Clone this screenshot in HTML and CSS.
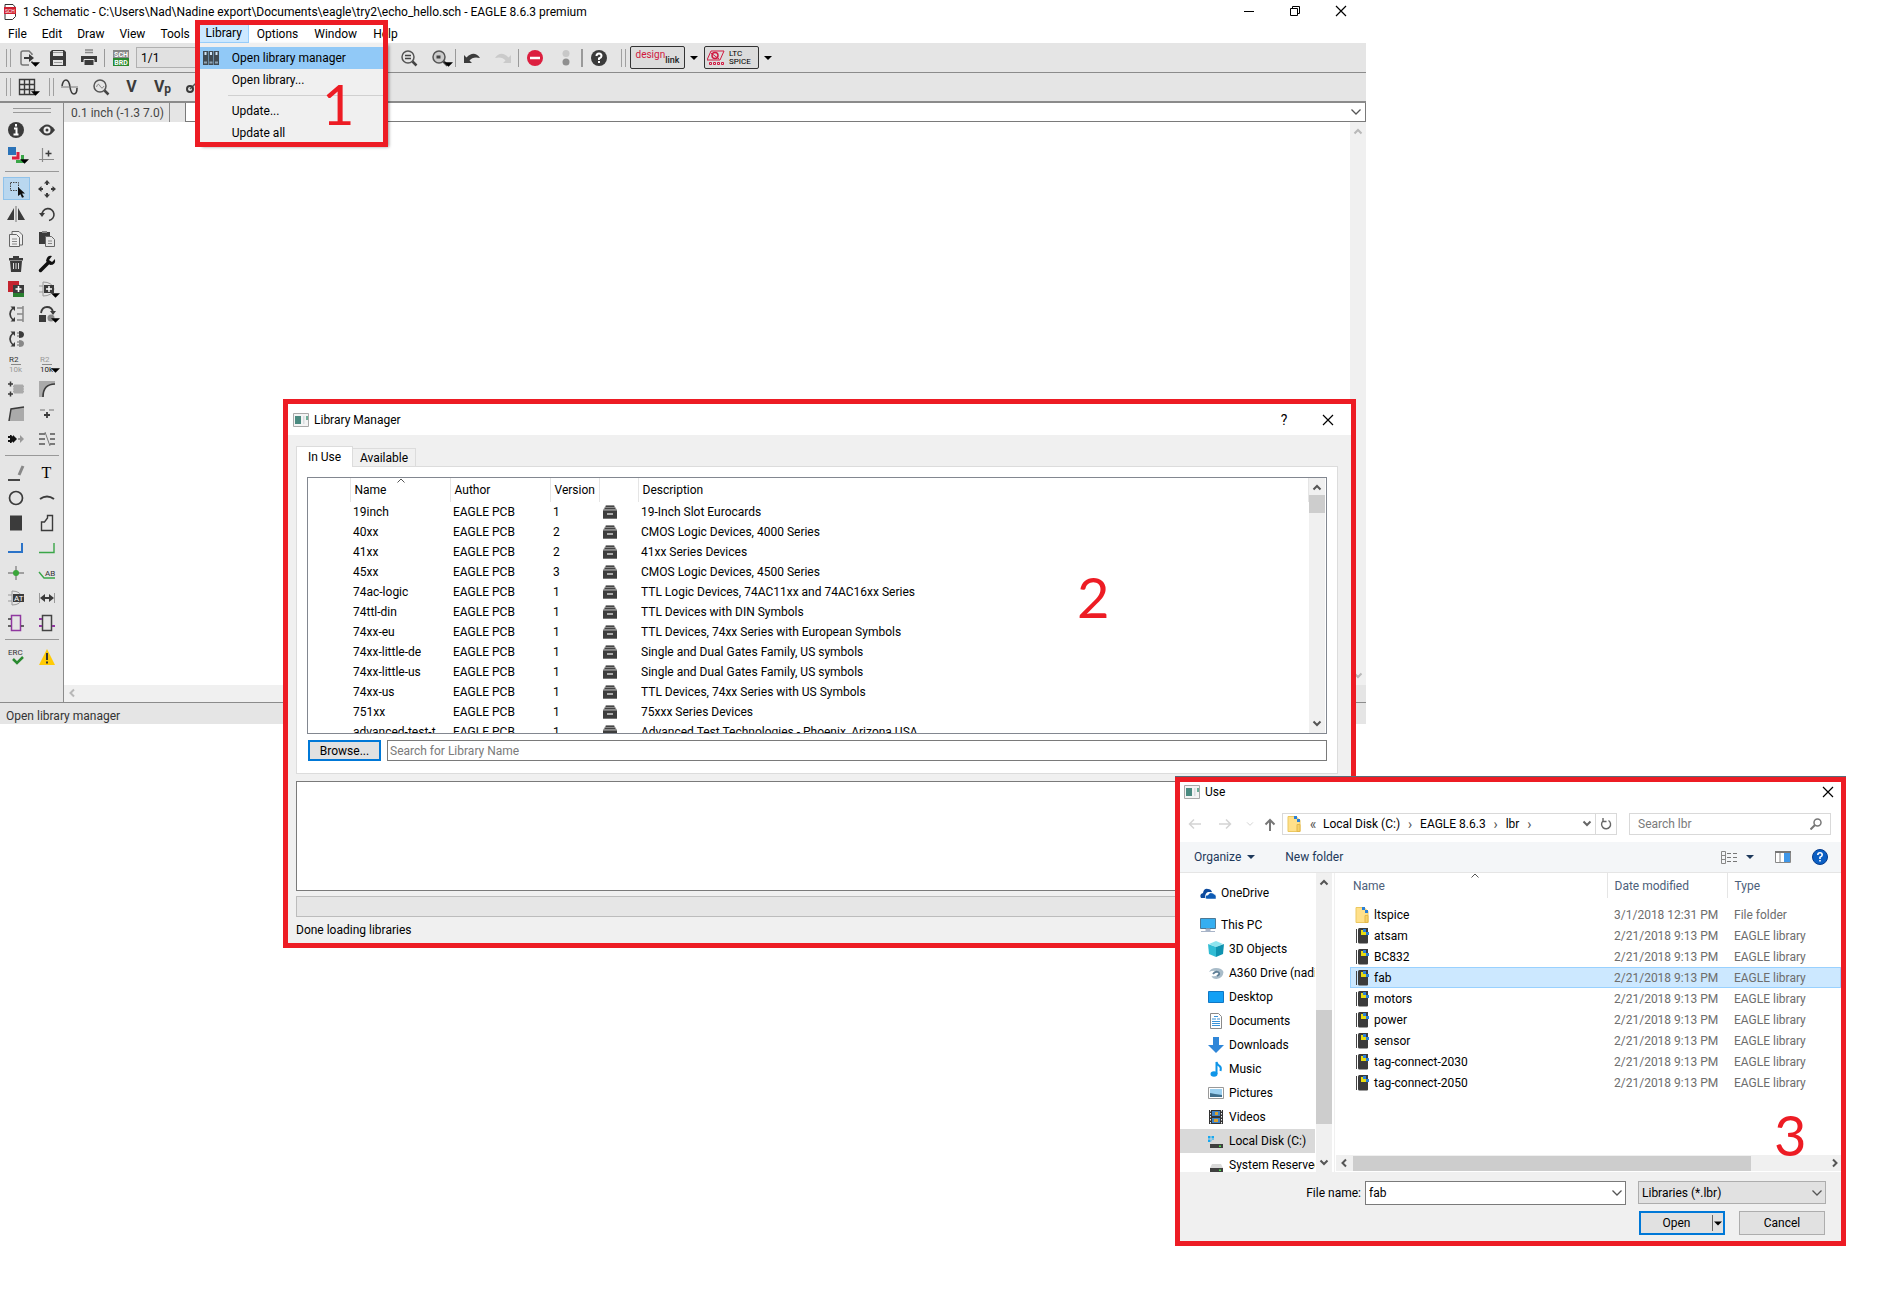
FILE: index.html
```html
<!DOCTYPE html>
<html lang="en">
<head>
<meta charset="utf-8">
<title>1 Schematic - EAGLE 8.6.3 premium</title>
<link rel="stylesheet" href="styles.css">
</head>
<body>
<svg class="defs" aria-hidden="true">
  <symbol id="drawer" viewBox="0 0 16 14"><path d="M4 0h8l3 5H1z" fill="#8c8c8c"/><path d="M4 1.5h8M3 3.5h10" stroke="#444"/><path d="M1 5h14v8H1z" fill="#3d3d3d"/><path d="M1 5.5h14M1 13.5h14" stroke="#777"/><path d="M5 9h6" stroke="#ddd" stroke-width="1.4"/></symbol>
  <symbol id="lbr" viewBox="0 0 16 16"><path d="M1.5 1v14" stroke="#444"/><path d="M3 1.500q0-1.500 1.500-1.500H13v14.500q0 1-1 1H4.500Q3 15.500 3 14z" fill="#3b3b3b"/><path d="M6 2h5v5H6z" fill="#e8dc10"/><path d="M8 1h3v3H8zM11 4h3v3h-3z" fill="#2a7fd8"/></symbol>
  <symbol id="folder" viewBox="0 0 16 16"><path d="M1 .5h8l4 4v11H1z" fill="#ffe08a" stroke="#ecc860"/><path d="M10 8.500h3v7h-3z" fill="#f7d169" stroke="#e3b84c"/><path d="M7 0h3v3H7zM10 3h3v3h-3z" fill="#2a7fd8"/></symbol>
  <symbol id="app" viewBox="0 0 16 14"><path d="M.5.5h15v13H.5z" fill="#f4f4f4" stroke="#a9a9a9"/><path d="M2 3h6v8H2z" fill="#4a8a80"/><path d="M10 3h1.500v8H10z" fill="#d8dde0"/><path d="M13 3h2v4h-2z" fill="#6fae98"/></symbol>
  <symbol id="down" viewBox="0 0 12 8"><path d="M1.500 1.500L6 6l4.500-4.500" fill="none" stroke="currentColor" stroke-width="1.300"/></symbol>
  <symbol id="bup" viewBox="0 0 10 8"><path d="M1.500 6.500L5 3l3.500 3.500" fill="none" stroke="currentColor" stroke-width="2"/></symbol>
  <symbol id="bdown" viewBox="0 0 10 8"><path d="M1.500 1.500L5 5l3.500-3.500" fill="none" stroke="currentColor" stroke-width="2"/></symbol>
  <symbol id="bleft" viewBox="0 0 8 10"><path d="M6 1.500L2.500 5 6 8.500" fill="none" stroke="currentColor" stroke-width="2"/></symbol>
  <symbol id="bright" viewBox="0 0 8 10"><path d="M2 1.500L5.500 5 2 8.500" fill="none" stroke="currentColor" stroke-width="2"/></symbol>
  <symbol id="tri" viewBox="0 0 8 4"><path d="M0 0h8L4 4z" fill="currentColor"/></symbol>
  <symbol id="close" viewBox="0 0 12 12"><path d="M1 1l10 10M11 1L1 11" stroke="#000" stroke-width="1.200"/></symbol>
  <symbol id="sort" viewBox="0 0 8 5"><path d="M.5 4.500L4 1l3.500 3.500" fill="none" stroke="#555"/></symbol>
  <symbol id="drive" viewBox="0 0 16 16"><path d="M4 7h9l2 4H2z" fill="#d9d9d9"/><path d="M2 11h13v4H2z" fill="#3f3f3f"/><path d="M11 12.500h2v1.500h-2z" fill="#4be04b"/></symbol>
</svg>

<main class="desktop">
<section class="main-window" aria-label="Schematic editor">
  <header class="title-bar">
    <svg class="app-icon" viewBox="0 0 12 16"><path d="M1 .5h8l2.500 3v9l-3 3H1z" fill="#fff" stroke="#333"/><path d="M0 3h12v7H0z" fill="#cf2030"/><text x="6" y="9" font-size="5" text-anchor="middle" fill="#fff">SCH</text></svg>
    <h1>1 Schematic - C:\Users\Nad\Nadine export\Documents\eagle\try2\echo_hello.sch - EAGLE 8.6.3 premium</h1>
    <div class="window-buttons">
      <button aria-label="Minimize"><svg width="10" height="12" viewBox="0 0 10 12"><path d="M0 6.500h10" stroke="#000"/></svg></button>
      <button aria-label="Restore"><svg width="10" height="10" viewBox="0 0 10 10"><path d="M.5 2.500h7v7h-7zM2.500 2V.5h7v7H8" fill="none" stroke="#000"/></svg></button>
      <button aria-label="Close"><svg width="12" height="12"><use href="#close"/></svg></button>
    </div>
  </header>
  <nav class="menu-bar">
    <button>File</button><button>Edit</button><button>Draw</button><button>View</button><button>Tools</button>
    <div class="menu-holder"><button class="active">Library</button>
      <div class="menu" role="menu">
        <button role="menuitem" class="hot"><svg width="16" height="14" viewBox="0 0 16 14"><path d="M0 0h5v14H0zM5.500 0h5v14h-5zM11 0h5v14h-5z" fill="#404a52"/><path d="M1.500 1h2v3h-2zM7 1h2v3H7zM12.500 1h2v3h-2z" fill="#cfe4f5"/><path d="M1 10.500h3v2H1zM6.500 10.500h3v2h-3zM12 10.500h3v2h-3z" fill="#8fa4b4"/></svg>Open library manager</button>
        <button role="menuitem">Open library...</button>
        <hr>
        <button role="menuitem">Update...</button>
        <button role="menuitem">Update all</button>
      </div>
    </div>
    <button>Options</button><button>Window</button><button>Help</button>
  </nav>

  <div class="toolbar">
    <span class="grip"></span>
    <button class="tool" aria-label="Open"><svg class="ico" viewBox="0 0 18 18"><path d="M11 16H5q-2 0-2-2V4q0-2 2-2h6l3 3v1M14 12v2" fill="none" stroke="#777" stroke-width="1.500"/><path d="M6 8h5V5l5 4-5 4v-3H6z" fill="#3b3b3b"/></svg><svg class="drop"><use href="#tri"/></svg></button>
    <button class="tool" aria-label="Save"><svg class="ico" viewBox="0 0 18 18"><path d="M1 3l2-2h12l2 2v14H1z" fill="#3b3b3b"/><path d="M4 2h10v5H4zM4 11h10v5H4z" fill="#e5e5e5"/><path d="M4 3.500h10M5 13.500h8" stroke="#999"/></svg></button>
    <button class="tool" aria-label="Print"><svg class="ico" viewBox="0 0 18 18"><path d="M5 1h8M5 3.500h8" stroke="#888" stroke-width="1.500"/><path d="M1 7h16v6H1z" fill="#3b3b3b"/><path d="M4 10.500h10v6H4z" fill="#3b3b3b" stroke="#e5e5e5"/></svg></button>
    <span class="sep"></span>
    <button class="tool" aria-label="Switch to board"><svg class="ico" viewBox="0 0 18 18"><path d="M1 1h16v8H1z" fill="#888"/><path d="M1 9h16v8H1z" fill="#2a8a30"/><text x="9" y="8" class="bits">SCH</text><text x="9" y="16" class="bits">BRD</text></svg></button>
    <select class="sheet" aria-label="Sheet"><option>1/1</option></select>
    <div class="tool-group">
      <button class="tool" aria-label="Zoom fit"><svg class="ico" viewBox="0 0 18 18"><circle cx="8" cy="8" r="6" fill="none" stroke="#555" stroke-width="1.500"/><path d="M5 6.500h6M5 9.500h6" stroke="#444" stroke-width="1.300"/><path d="M12.500 12.500l4 4" stroke="#444" stroke-width="2.500"/></svg></button>
      <button class="tool" aria-label="Zoom select"><svg class="ico" viewBox="0 0 18 18"><circle cx="8" cy="8" r="6" fill="#ccc" stroke="#555" stroke-width="1.500"/><path d="M5.500 6.500h4v3h-4z" fill="#444"/><path d="M12.500 12.500l4 4" stroke="#444" stroke-width="2.500"/></svg><svg class="drop"><use href="#tri"/></svg></button>
      <span class="sep"></span>
      <button class="tool" aria-label="Undo"><svg class="ico" viewBox="0 0 18 18"><path d="M1 6v8h8L6.500 11.500Q10 7 17 9 11 1 3.500 8.500z" fill="#3b3b3b"/></svg></button>
      <button class="tool" aria-label="Redo"><svg class="ico" viewBox="0 0 18 18"><path d="M17 6v8H9l2.500-2.500Q8 7 1 9 7 1 14.500 8.500z" fill="#cacaca"/></svg></button>
      <span class="sep"></span>
      <button class="tool" aria-label="Stop"><svg class="ico" viewBox="0 0 18 18"><circle cx="9" cy="9" r="8" fill="#dc1f3f"/><path d="M4 9h10" stroke="#fff" stroke-width="2.500"/></svg></button>
      <button class="tool" aria-label="Go"><svg class="ico" viewBox="0 0 18 18"><circle cx="9" cy="4.500" r="3.500" fill="#c8c8c8"/><circle cx="9" cy="13" r="3.500" fill="#8f8f8f"/></svg></button>
      <span class="sep wide"></span>
      <button class="tool" aria-label="Help"><svg class="ico" viewBox="0 0 18 18"><circle cx="9" cy="9" r="8" fill="#3b3b3b"/><path d="M6.500 7q0-2.500 2.500-2.500T11.500 7Q11.500 8.500 9 9.500V11M9 12v2" fill="none" stroke="#fff" stroke-width="2"/></svg></button>
    </div>
    <span class="grip brand-grip"></span>
    <button class="brand"><span class="design"><span>design</span><b>link</b></span></button>
    <button class="arrow" aria-label="Design link options"><svg width="8" height="4"><use href="#tri"/></svg></button>
    <button class="brand spice"><svg width="18" height="16" viewBox="0 0 18 16"><path d="M4 1h13l-4 9H0zM2.500 12.500h2v2h-2zM6.500 12.500h2v2h-2zM10.500 12.500h2v2h-2zM14.500 12.500h2v2h-2z" fill="none" stroke="#d01840"/><circle cx="8" cy="5.500" r="3" fill="none" stroke="#d01840" stroke-width="1.500"/><path d="M4 3l8 6" stroke="#d01840"/></svg><span>LTC<br>SPICE</span></button>
    <button class="arrow" aria-label="Spice options"><svg width="8" height="4"><use href="#tri"/></svg></button>
  </div>

  <div class="toolbar second">
    <span class="grip"></span>
    <button class="tool" aria-label="Grid"><svg class="ico" viewBox="0 0 18 18"><path d="M1.500 1.500h15v15h-15zM6.500 1v16M11.500 1v16M1 6.500h16M1 11.500h16" fill="none" stroke="#3b3b3b" stroke-width="1.400"/></svg><svg class="drop"><use href="#tri"/></svg></button>
    <span class="grip inner-grip"></span>
    <button class="tool" aria-label="Simulate"><svg class="ico" viewBox="0 0 18 18"><path d="M1 8q1-6 4-6t4 7 4 7 3-6" fill="none" stroke="#3b3b3b" stroke-width="1.600"/><path d="M0 9h17" stroke="#777"/></svg></button>
    <button class="tool" aria-label="Probe"><svg class="ico" viewBox="0 0 18 18"><circle cx="8" cy="8" r="6" fill="none" stroke="#555" stroke-width="1.500"/><path d="M4.500 9Q6 4 8 8t4 0" fill="none" stroke="#888"/><path d="M12.500 12.500l4 4" stroke="#444" stroke-width="2.500"/></svg></button>
    <button class="tool letter">V</button>
    <button class="tool letter">V<small>p</small></button>
    <button class="tool" aria-label="Net"><svg class="ico" viewBox="0 0 18 18"><path d="M5 11l6-6 4 5" fill="none" stroke="#555" stroke-width="1.500"/><circle cx="5" cy="11" r="3" fill="none" stroke="#3b3b3b" stroke-width="2"/><circle cx="12" cy="4" r="2" fill="#3b3b3b"/></svg></button>
  </div>

  <div class="workspace">
    <aside class="palette">
      <span class="palette-grip"></span>
      <div class="pair">
        <button aria-label="Info"><svg class="ico" viewBox="0 0 18 18"><circle cx="9" cy="9" r="8" fill="#3b3b3b"/><path d="M9 3v2.500M7 7.500h2.500V13M6.500 13.500h5" fill="none" stroke="#fff" stroke-width="2"/></svg></button>
        <button aria-label="Show"><svg class="ico" viewBox="0 0 18 18"><path d="M1 9q8-11 16 0-8 11-16 0" fill="#3b3b3b"/><circle cx="9" cy="9" r="3.500" fill="#eee"/><circle cx="9" cy="9" r="1.500" fill="#3b3b3b"/></svg></button>
        <button aria-label="Layers"><svg class="ico" viewBox="0 0 18 18"><path d="M1 1h8v8H1z" fill="#2b73b8"/><path d="M11 6v6H5" fill="none" stroke="#dc1f3f" stroke-width="3"/><path d="M15.500 9v6.500H9" fill="none" stroke="#3aa648" stroke-width="3"/></svg><svg class="drop"><use href="#tri"/></svg></button>
        <button aria-label="Mark"><svg class="ico" viewBox="0 0 18 18"><path d="M4.500 2v14M1 13.500h15" stroke="#8a8a8a" stroke-width="1.200"/><path d="M7.500 7.500h6M10.500 4.500v6" stroke="#3b3b3b" stroke-width="1.500"/></svg></button>
      </div>
      <hr>
      <div class="pair">
        <button class="selected" aria-label="Group"><svg class="ico" viewBox="0 0 18 18"><path d="M2.500 2.500h8v8h-8z" fill="none" stroke="#444" stroke-dasharray="1.500 1"/><path d="M10 7l7 6.500h-3l2 3.500-2 .8-1.500-3.600L10 16z" fill="#111"/></svg></button>
        <button aria-label="Move"><svg class="ico" viewBox="0 0 18 18"><path d="M9 0l3 3.500H6zM9 18l3-3.500H6zM0 9l3.500-3v6zM18 9l-3.500-3v6z" fill="#3b3b3b"/><path d="M8 3h2v2H8zM8 13h2v2H8zM3 8h2v2H3zM13 8h2v2h-2z" fill="#3b3b3b"/></svg></button>
        <button aria-label="Mirror"><svg class="ico" viewBox="0 0 18 18"><path d="M7 3v12H0zM11 3v12h7z" fill="#3b3b3b"/><path d="M9 1v16" stroke="#999" stroke-width="1.500"/></svg></button>
        <button aria-label="Rotate"><svg class="ico" viewBox="0 0 18 18"><path d="M4 10A6 6 0 1 1 11 15.500" fill="none" stroke="#3b3b3b" stroke-width="1.600"/><path d="M1 8h6l-3 4z" fill="#3b3b3b"/></svg></button>
        <button aria-label="Copy"><svg class="ico" viewBox="0 0 18 18"><path d="M5 4V1.500h7l3.500 3.500v10H13M2.500 4.500h7l3 3v9h-10z" fill="#eee" stroke="#666"/><path d="M5 9h5M5 11.500h5M5 14h5" stroke="#888"/></svg></button>
        <button aria-label="Paste"><svg class="ico" viewBox="0 0 18 18"><path d="M1 2h11v12H1z" fill="#3b3b3b"/><path d="M4 1h5v2H4z" fill="#888"/><path d="M7.500 6.500h6l3 3v7h-9z" fill="#e5e5e5" stroke="#666"/><path d="M10 11h4M10 13.500h4" stroke="#888"/></svg></button>
        <button aria-label="Delete"><svg class="ico" viewBox="0 0 18 18"><path d="M2 3h14v2.500H2zM6 1h6v2H6zM3 6h12l-1 11H4z" fill="#3b3b3b"/><path d="M6.500 8v6M9 8v6M11.500 8v6" stroke="#ddd"/></svg></button>
        <button aria-label="Change"><svg class="ico" viewBox="0 0 18 18"><path d="M2.500 15.500l8-8" stroke="#111" stroke-width="3.500" stroke-linecap="round"/><path d="M14 1q-5-1-6 5l4 4q6 0 5-6l-3 3-3-2z" fill="#111"/></svg></button>
        <button aria-label="Add part"><svg class="ico" viewBox="0 0 18 18"><path d="M1 1h11v11H1z" fill="#c4242f"/><path d="M6 12h11v5H6z" fill="#2a8030"/><path d="M6 5h11v8H6z" fill="#3b3b3b"/><path d="M8.500 9h6M11.500 6v6" stroke="#fff" stroke-width="1.600"/></svg></button>
        <button aria-label="Replace"><svg class="ico" viewBox="0 0 18 18"><path d="M5 2q9 0 11 7-2 7-11 7zM1 6h4M1 12h4" fill="none" stroke="#999"/><path d="M6 5h10v8H6z" fill="#3b3b3b"/><path d="M8 9h6M11 6v6" stroke="#fff" stroke-width="1.500"/></svg><svg class="drop"><use href="#tri"/></svg></button>
        <button aria-label="Pinswap"><svg class="ico" viewBox="0 0 18 18"><path d="M6 3q-6 6 0 12" fill="none" stroke="#3b3b3b" stroke-width="1.600"/><path d="M3.500 1.500H8V6zM3.500 16.500H8V12z" fill="#3b3b3b"/><path d="M16 1v16M10 3h6M10 9h6M10 15h6" stroke="#888" stroke-width="1.500"/></svg></button>
        <button aria-label="Gateswap"><svg class="ico" viewBox="0 0 18 18"><path d="M3 8q1-6 6-6t6 5" fill="none" stroke="#3b3b3b" stroke-width="1.800"/><path d="M12 6h6l-3 4zM1 10h7v7H1z" fill="#3b3b3b"/><circle cx="13" cy="13" r="3.500" fill="#888"/></svg><svg class="drop"><use href="#tri"/></svg></button>
        <button aria-label="Swap gates"><svg class="ico" viewBox="0 0 18 18"><path d="M6 3q-6 6 0 12" fill="none" stroke="#3b3b3b" stroke-width="1.600"/><path d="M3.500 1.500H8V6zM3.500 16.500H8V12z" fill="#3b3b3b"/><path d="M12 1q5 0 5 3.500T12 8z" fill="#3b3b3b"/><path d="M12 10q5 0 5 3.500T12 17z" fill="#888"/><path d="M10 3h2M10 6h2M10 12h2M10 15h2" stroke="#666"/></svg></button>
        <span></span>
        <button aria-label="Name"><svg class="ico" viewBox="0 0 18 18"><text x="2" y="7" font-size="8" fill="#333">R2</text><path d="M4 9.500h10" stroke="#888"/><text x="2" y="17" font-size="8" fill="#999">10k</text></svg></button>
        <button aria-label="Value"><svg class="ico" viewBox="0 0 18 18"><text x="2" y="7" font-size="8" fill="#999">R2</text><path d="M4 9.500h10" stroke="#888"/><text x="2" y="17" font-size="8" fill="#222">10k</text></svg><svg class="drop"><use href="#tri"/></svg></button>
        <button aria-label="Smash"><svg class="ico" viewBox="0 0 18 18"><path d="M7 5h9v8H7zM6 6.500h11M6 9h11M6 11.500h11" fill="#aaa" stroke="#aaa"/><path d="M1 4h5M3.500 1.500v5M1 14h5M3.500 11.500v5" stroke="#3b3b3b" stroke-width="1.500"/></svg></button>
        <button aria-label="Miter"><svg class="ico" viewBox="0 0 18 18"><path d="M1 1h16v3Q5 4 5 17H1z" fill="#aaa"/><path d="M5 17Q5 4 17 4" fill="none" stroke="#3b3b3b" stroke-width="1.700"/></svg></button>
        <button aria-label="Split"><svg class="ico" viewBox="0 0 18 18"><path d="M2 16L4 4l13-2v14z" fill="#aaa"/><path d="M2 16L4 4l13-2" fill="none" stroke="#3b3b3b" stroke-width="1.500"/></svg></button>
        <button aria-label="Invoke"><svg class="ico" viewBox="0 0 18 18"><path d="M2 5h5M11 5h5" stroke="#999" stroke-width="1.500"/><path d="M6 10h6M9 7v6" stroke="#3b3b3b" stroke-width="1.800"/></svg></button>
        <button aria-label="Net class"><svg class="ico" viewBox="0 0 18 18"><path d="M3 5h1l5 4-5 4H3zM1 6h3v2H1zM1 10h3v2H1zM6 5l4 4-4 4z" fill="#111"/><path d="M17 9l-4-4v3h-2v2h2v3z" fill="#999"/></svg></button>
        <button aria-label="Optimize"><svg class="ico" viewBox="0 0 18 18"><path d="M1 4h6M1 9h6M1 14h6M12 4h5M12 9h5M12 14h5" stroke="#555" stroke-width="1.600"/><path d="M7 2l5 14" stroke="#777"/></svg></button>
      </div>
      <hr>
      <div class="pair">
        <button aria-label="Line"><svg class="ico" viewBox="0 0 18 18"><path d="M1 16h12" stroke="#111" stroke-width="1.500"/><path d="M12 11l4-9" stroke="#888" stroke-width="3"/></svg></button>
        <button class="serif" aria-label="Text">T</button>
        <button aria-label="Circle"><svg class="ico" viewBox="0 0 18 18"><circle cx="9" cy="9" r="6.500" fill="none" stroke="#3b3b3b" stroke-width="1.700"/></svg></button>
        <button aria-label="Arc"><svg class="ico" viewBox="0 0 18 18"><path d="M2 10q7-5 14 0" fill="none" stroke="#3b3b3b" stroke-width="2"/></svg></button>
        <button aria-label="Rectangle"><svg class="ico" viewBox="0 0 18 18"><path d="M3 1.500h12v15H3z" fill="#3b3b3b"/></svg></button>
        <button aria-label="Polygon"><svg class="ico" viewBox="0 0 18 18"><path d="M3.500 16.500V8h3l3-4V1.500h5v15z" fill="none" stroke="#3b3b3b" stroke-width="1.400"/></svg></button>
        <button aria-label="Bus"><svg class="ico" viewBox="0 0 18 18"><path d="M1 13h14V4" fill="none" stroke="#2b73c8" stroke-width="2"/></svg></button>
        <button aria-label="Net line"><svg class="ico" viewBox="0 0 18 18"><path d="M1 13.500h15V4" fill="none" stroke="#3aa648" stroke-width="1.400"/></svg></button>
        <button aria-label="Junction"><svg class="ico" viewBox="0 0 18 18"><path d="M1 9h16M9 2v14" stroke="#888" stroke-width="1.400"/><circle cx="9" cy="9" r="3" fill="#3aa63a"/></svg></button>
        <button aria-label="Label"><svg class="ico" viewBox="0 0 18 18"><path d="M1 8l5 6h11" fill="none" stroke="#3aa648" stroke-width="1.400"/><text x="7" y="12" font-size="8" fill="#333">AB</text></svg></button>
        <button aria-label="Attribute"><svg class="ico" viewBox="0 0 18 18"><path d="M5 2q9 0 10 7-1 7-10 7zM1 6h4M1 12h4" fill="none" stroke="#999"/><path d="M6 5h11v8H6z" fill="#3b3b3b"/><text x="7" y="12" font-size="8" fill="#fff">AT</text></svg></button>
        <button aria-label="Dimension"><svg class="ico" viewBox="0 0 18 18"><path d="M1.500 4v10M16.500 4v10" stroke="#999"/><path d="M2 9l5-4v3h4V5l5 4-5 4v-3H7v3z" fill="#3b3b3b"/></svg></button>
        <button aria-label="Module"><svg class="ico" viewBox="0 0 18 18"><path d="M4.500 1.500h9v15h-9z" fill="none" stroke="#9038a0" stroke-width="1.500"/><path d="M1 5h3M1 12h3M14 12h3" stroke="#3b3b3b" stroke-width="1.500"/></svg></button>
        <button aria-label="Port"><svg class="ico" viewBox="0 0 18 18"><path d="M4.500 1.500h9v15h-9z" fill="none" stroke="#444" stroke-width="1.500"/><path d="M1 5h3M1 12h3M14 12h3" stroke="#9038a0" stroke-width="2"/></svg></button>
      </div>
      <hr>
      <div class="pair">
        <button aria-label="Electrical rule check"><svg class="ico" viewBox="0 0 18 18"><text x="1" y="7" font-size="8" fill="#333">ERC</text><path d="M6 11l4 4 6-6" fill="none" stroke="#2a8a30" stroke-width="2.500"/></svg></button>
        <button aria-label="Errors"><svg class="ico" viewBox="0 0 18 18"><path d="M9 1l8 16H1z" fill="#ffcb05"/><path d="M9 5v7M9 13.500v2" stroke="#333" stroke-width="2"/></svg></button>
      </div>
    </aside>
    <div class="editor">
      <div class="command-row">
        <output>0.1 inch (-1.3 7.0)</output>
        <div class="command-box"><input type="text" aria-label="Command"><button aria-label="Command history"><svg width="12" height="8"><use href="#down"/></svg></button></div>
      </div>
      <div class="canvas-row">
        <div class="canvas"></div>
        <div class="vscroll faint"><svg width="10" height="8"><use href="#bup"/></svg><svg width="10" height="8"><use href="#bdown"/></svg></div>
      </div>
      <div class="canvas-foot"><svg width="8" height="10"><use href="#bleft"/></svg></div>
    </div>
  </div>
  <footer class="status-bar">Open library manager</footer>
</section>

<div class="callout callout-menu"><span>1</span></div>

<section class="framed library-manager" aria-label="Library Manager">
  <header class="dialog-title">
    <svg width="16" height="14"><use href="#app"/></svg><h2>Library Manager</h2>
    <button aria-label="Help">?</button>
    <button aria-label="Close"><svg width="12" height="12"><use href="#close"/></svg></button>
  </header>
  <div class="manager-body">
    <div class="tabs" role="tablist"><button role="tab" class="current" aria-selected="true">In Use</button><button role="tab" aria-selected="false">Available</button></div>
    <div class="tab-panel">
      <div class="library-list">
        <div class="list-clip">
        <table>
          <colgroup><col class="c-blank"><col class="c-name"><col class="c-author"><col class="c-version"><col class="c-icon"><col></colgroup>
          <thead><tr><th></th><th>Name<svg class="sort" width="8" height="5"><use href="#sort"/></svg></th><th>Author</th><th>Version</th><th></th><th>Description</th></tr></thead>
          <tbody>
            <tr><td></td><td>19inch</td><td>EAGLE PCB</td><td>1</td><td><svg><use href="#drawer"/></svg></td><td>19-Inch Slot Eurocards</td></tr>
            <tr><td></td><td>40xx</td><td>EAGLE PCB</td><td>2</td><td><svg><use href="#drawer"/></svg></td><td>CMOS Logic Devices, 4000 Series</td></tr>
            <tr><td></td><td>41xx</td><td>EAGLE PCB</td><td>2</td><td><svg><use href="#drawer"/></svg></td><td>41xx Series Devices</td></tr>
            <tr><td></td><td>45xx</td><td>EAGLE PCB</td><td>3</td><td><svg><use href="#drawer"/></svg></td><td>CMOS Logic Devices, 4500 Series</td></tr>
            <tr><td></td><td>74ac-logic</td><td>EAGLE PCB</td><td>1</td><td><svg><use href="#drawer"/></svg></td><td>TTL Logic Devices, 74AC11xx and 74AC16xx Series</td></tr>
            <tr><td></td><td>74ttl-din</td><td>EAGLE PCB</td><td>1</td><td><svg><use href="#drawer"/></svg></td><td>TTL Devices with DIN Symbols</td></tr>
            <tr><td></td><td>74xx-eu</td><td>EAGLE PCB</td><td>1</td><td><svg><use href="#drawer"/></svg></td><td>TTL Devices, 74xx Series with European Symbols</td></tr>
            <tr><td></td><td>74xx-little-de</td><td>EAGLE PCB</td><td>1</td><td><svg><use href="#drawer"/></svg></td><td>Single and Dual Gates Family, US symbols</td></tr>
            <tr><td></td><td>74xx-little-us</td><td>EAGLE PCB</td><td>1</td><td><svg><use href="#drawer"/></svg></td><td>Single and Dual Gates Family, US symbols</td></tr>
            <tr><td></td><td>74xx-us</td><td>EAGLE PCB</td><td>1</td><td><svg><use href="#drawer"/></svg></td><td>TTL Devices, 74xx Series with US Symbols</td></tr>
            <tr><td></td><td>751xx</td><td>EAGLE PCB</td><td>1</td><td><svg><use href="#drawer"/></svg></td><td>75xxx Series Devices</td></tr>
            <tr><td></td><td>advanced-test-t</td><td>EAGLE PCB</td><td>1</td><td><svg><use href="#drawer"/></svg></td><td>Advanced Test Technologies - Phoenix, Arizona USA</td></tr>
          </tbody>
        </table>
        </div>
        <div class="vscroll"><svg width="10" height="8"><use href="#bup"/></svg><span class="thumb short"></span><svg width="10" height="8"><use href="#bdown"/></svg></div>
      </div>
      <div class="browse-row"><button class="push default">Browse...</button><input type="text" aria-label="Search for Library Name" placeholder="Search for Library Name"></div>
    </div>
    <textarea aria-label="Library details"></textarea>
    <div class="progress"></div>
    <p>Done loading libraries</p>
  </div>
  <span class="callout-number number-two">2</span>
</section>

<section class="framed file-dialog" aria-label="Use">
  <header class="dialog-title small">
    <svg width="16" height="14"><use href="#app"/></svg><h2>Use</h2>
    <button aria-label="Close"><svg width="12" height="12"><use href="#close"/></svg></button>
  </header>
  <div class="address-row">
    <button aria-label="Back"><svg width="14" height="12" viewBox="0 0 14 12"><path d="M13 6H1.500M6 1.500L1.500 6 6 10.500" fill="none" stroke="#d4d4d4" stroke-width="1.500"/></svg></button>
    <button aria-label="Forward"><svg width="14" height="12" viewBox="0 0 14 12"><path d="M1 6h11.500M8 1.500L12.500 6 8 10.500" fill="none" stroke="#d4d4d4" stroke-width="1.500"/></svg></button>
    <button class="narrow" aria-label="Recent"><svg width="8" height="6" viewBox="0 0 12 8" color="#ccc"><use href="#down"/></svg></button>
    <button class="narrow" aria-label="Up"><svg width="12" height="13" viewBox="0 0 12 13"><path d="M6 13V2M1.500 6.500L6 2l4.500 4.500" fill="none" stroke="#777" stroke-width="2"/></svg></button>
    <div class="address">
      <svg width="16" height="16"><use href="#folder"/></svg>
      <span class="crumb-sep">«</span><a href="#c">Local Disk (C:)</a><span class="crumb-sep">›</span><a href="#eagle">EAGLE 8.6.3</a><span class="crumb-sep">›</span><a href="#lbr-dir">lbr</a><span class="crumb-sep">›</span>
      <button class="history" aria-label="Previous locations"><svg width="12" height="8"><use href="#bdown"/></svg></button>
      <button class="refresh" aria-label="Refresh"><svg width="12" height="12" viewBox="0 0 12 12"><path d="M8.500 2.500A4.500 4.500 0 1 1 3 3M3 0v3.500h3.500" fill="none" stroke="#666" stroke-width="1.400"/></svg></button>
    </div>
    <label class="search"><input type="text" placeholder="Search lbr" aria-label="Search lbr"><svg width="12" height="12" viewBox="0 0 12 12"><circle cx="7.500" cy="4.500" r="3.500" fill="none" stroke="#777" stroke-width="1.500"/><path d="M5 7l-4.500 4.500" stroke="#777" stroke-width="2"/></svg></label>
  </div>
  <div class="command-bar">
    <button>Organize<svg width="8" height="4"><use href="#tri"/></svg></button>
    <button>New folder</button>
    <div class="view-tools">
      <button aria-label="Views"><svg width="16" height="13" viewBox="0 0 16 13"><path d="M.5.5h4v12h-4zM.5 4.500h4M.5 8.500h4" fill="none" stroke="#888"/><path d="M6 2.500h4M12 2.500h4M6 6.500h4M12 6.500h4M6 10.500h4M12 10.500h4" stroke="#777"/></svg><svg class="after" width="8" height="4"><use href="#tri"/></svg></button>
      <button aria-label="Preview pane"><svg width="16" height="12" viewBox="0 0 16 12"><path d="M.5.5h15v11H.5zM5 1v10" fill="#fff" stroke="#888"/><path d="M9 2h6v9H9z" fill="#3f97e8"/><path d="M0 1h16" stroke="#777" stroke-width="2"/></svg></button>
      <button aria-label="Help"><svg width="16" height="16" viewBox="0 0 16 16"><circle cx="8" cy="8" r="7.500" fill="#0b5fc4" stroke="#063c8c"/><path d="M5.800 6q0-2.200 2.200-2.200T10.200 6Q10.200 7.200 8 8.200V10M8 11v1.500" fill="none" stroke="#fff" stroke-width="1.600"/></svg></button>
    </div>
  </div>
  <div class="browser">
    <nav class="places">
      <a href="#onedrive"><svg viewBox="0 0 16 16"><path d="M1 13q-2-4 2-5 1-5 5-4 3 0 4 3H8q-3 1-3 6z" fill="#0d4a9c"/><path d="M6 14q-2-4 2-4 2-4 6-1 3 1 2 5z" fill="#0d5bb5" stroke="#fff" stroke-width=".5"/></svg>OneDrive</a>
      <a href="#pc" class="gap"><svg viewBox="0 0 16 16"><path d="M.5 1.500h15v10H.5z" fill="#35aef0" stroke="#4d7894"/><path d="M6 12h4v2H6zM1 14.500h14" fill="#a8b4c8" stroke="#a8b4c8"/></svg>This PC</a>
      <a href="#objects" class="sub"><svg viewBox="0 0 16 16"><path d="M1 3l7-3 7 3-7 3z" fill="#8de4ee"/><path d="M0 3l8 3v10l-7-3z" fill="#30bcd4"/><path d="M8 6l8-3-1 10-7 3z" fill="#0f93b0"/></svg>3D Objects</a>
      <a href="#a360" class="sub"><svg viewBox="0 0 16 16"><path d="M1 7q2-4 7-4 6 0 7.500 4-.5 6-7 7-4 0-5-3 4 1 6-1 3-3-1-4-4-1-7.500 1" fill="#a9bcc9"/><path d="M5 9q2-3 5-2 3 2-1 4" fill="none" stroke="#5f7f96" stroke-width="1.800"/></svg>A360 Drive (nadine)</a>
      <a href="#desktop" class="sub"><svg viewBox="0 0 16 16"><path d="M.5 2.500h15v11H.5z" fill="#12a0f5" stroke="#1077c4"/></svg>Desktop</a>
      <a href="#documents" class="sub"><svg viewBox="0 0 16 16"><path d="M2.500.5h8l3 3v12h-11z" fill="#fff" stroke="#8a8a8a"/><path d="M4 6h4M9 6h3M4 8.500h8M4 10.500h8M4 12.500h8M6 3.500h4" stroke="#3a93d8"/></svg>Documents</a>
      <a href="#downloads" class="sub"><svg viewBox="0 0 16 16"><path d="M5 0h6v8h5l-8 8-8-8h5z" fill="#2f86d8"/></svg>Downloads</a>
      <a href="#music" class="sub"><svg viewBox="0 0 16 16"><path d="M8.500 13V1q1 3 3 4t1 5" fill="none" stroke="#0f95e8" stroke-width="2"/><ellipse cx="6" cy="13" rx="3.500" ry="2.700" fill="#0f95e8"/></svg>Music</a>
      <a href="#pictures" class="sub"><svg viewBox="0 0 16 16"><path d="M.5 2.500h15v11H.5z" fill="#fff" stroke="#999"/><path d="M2 4h12v8H2z" fill="#9cd0f0"/><path d="M2 8l5 1 7 1v2H2z" fill="#3f6e8c"/></svg>Pictures</a>
      <a href="#videos" class="sub"><svg viewBox="0 0 16 16"><path d="M1 1h14v14H1z" fill="#333"/><path d="M4 2h8v5H4zM4 9h8v5H4z" fill="#3d82c8"/><path d="M7 3h3v3H7zM6 10h4v3H6z" fill="#d8a030"/><path d="M2.500 1v14M13.500 1v14" stroke="#eee" stroke-dasharray="1.500 1.500"/></svg>Videos</a>
      <a href="#local" class="sub picked"><svg viewBox="0 0 16 16"><path d="M0 3h2.500v2.500H0zM3.500 3H6v2.500H3.500zM0 6.500h2.500V9H0zM3.500 6.500H6V9H3.500z" fill="#18a8f0"/><use href="#drive"/></svg>Local Disk (C:)</a>
      <a href="#reserved" class="sub"><svg viewBox="0 0 16 16"><use href="#drive"/></svg>System Reserved</a>
    </nav>
    <div class="vscroll"><svg width="10" height="8"><use href="#bup"/></svg><span class="thumb long"></span><svg width="10" height="8"><use href="#bdown"/></svg></div>
    <div class="files">
      <table>
        <colgroup><col><col class="c-date"><col class="c-type"></colgroup>
        <thead><tr><th>Name<svg class="sort" width="8" height="5"><use href="#sort"/></svg></th><th>Date modified</th><th>Type</th></tr></thead>
        <tbody>
          <tr><td><svg><use href="#folder"/></svg>ltspice</td><td>3/1/2018 12:31 PM</td><td>File folder</td></tr>
          <tr><td><svg><use href="#lbr"/></svg>atsam</td><td>2/21/2018 9:13 PM</td><td>EAGLE library</td></tr>
          <tr><td><svg><use href="#lbr"/></svg>BC832</td><td>2/21/2018 9:13 PM</td><td>EAGLE library</td></tr>
          <tr class="picked"><td><svg><use href="#lbr"/></svg>fab</td><td>2/21/2018 9:13 PM</td><td>EAGLE library</td></tr>
          <tr><td><svg><use href="#lbr"/></svg>motors</td><td>2/21/2018 9:13 PM</td><td>EAGLE library</td></tr>
          <tr><td><svg><use href="#lbr"/></svg>power</td><td>2/21/2018 9:13 PM</td><td>EAGLE library</td></tr>
          <tr><td><svg><use href="#lbr"/></svg>sensor</td><td>2/21/2018 9:13 PM</td><td>EAGLE library</td></tr>
          <tr><td><svg><use href="#lbr"/></svg>tag-connect-2030</td><td>2/21/2018 9:13 PM</td><td>EAGLE library</td></tr>
          <tr><td><svg><use href="#lbr"/></svg>tag-connect-2050</td><td>2/21/2018 9:13 PM</td><td>EAGLE library</td></tr>
        </tbody>
      </table>
      <div class="hscroll"><svg width="8" height="10"><use href="#bleft"/></svg><span class="hthumb"></span><svg width="8" height="10"><use href="#bright"/></svg></div>
    </div>
  </div>
  <form class="choose">
    <label for="file-name">File name:</label>
    <div class="combo"><input id="file-name" type="text" value="fab"><svg width="12" height="8"><use href="#down"/></svg></div>
    <div class="combo grey"><select aria-label="File type"><option>Libraries (*.lbr)</option></select><svg width="12" height="8"><use href="#down"/></svg></div>
    <div class="actions"><button type="button" class="push default split"><span>Open</span><svg width="8" height="5"><use href="#tri"/></svg></button><button type="button" class="push">Cancel</button></div>
  </form>
  <span class="callout-number number-three">3</span>
</section>
</main>
</body>
</html>
```

FILE: styles.css
```css
* { box-sizing: border-box; }
body { margin: 0; background: #fff; color: #000; font: 12px/16px Roboto, "Open Sans", sans-serif; }
button, input, select, textarea { font: inherit; color: inherit; margin: 0; padding: 0; border: 0; border-radius: 0; background: none; outline: 0; }
h1, h2, p { margin: 0; font-size: 12px; font-weight: 400; }
a { color: inherit; text-decoration: none; }
svg { display: block; flex: none; }
table { border-collapse: collapse; border-spacing: 0; table-layout: fixed; width: 100%; }
th, td { padding: 0; text-align: left; font-weight: 400; white-space: nowrap; }
.defs { position: absolute; width: 0; height: 0; }
.desktop { position: relative; min-height: 100vh; overflow: hidden; }

/* Schematic window */
.main-window { width: calc(100% - 534px); background: #fff; }
.title-bar { display: flex; align-items: center; height: 24px; padding: 0 19px 3px 4px; gap: 7px; }
.title-bar h1 { flex: 1; padding-top: 3px; font-size: 12px; }
.app-icon { width: 12px; height: 16px; margin-top: 2px; }
.window-buttons { display: flex; gap: 34px; }
.window-buttons button { display: grid; place-items: center; height: 16px; min-width: 12px; }
.menu-bar { display: flex; height: 19px; padding-left: 1px; }
.menu-bar > button { height: 19px; padding: 0 8px 0 7px; }
.menu-holder ~ button { padding: 0 8px; }
.menu-holder { position: relative; padding-left: 1px; }
.menu-holder > button.active { width: 50px; height: 19px; background: #cce8ff; border: 1px solid #99d1ff; border-width: 0 1px 1px; }
.menu { position: absolute; left: 0; top: 19px; width: 187px; height: 102px; z-index: 2; padding: 4px 2px 0; background: #f0f0f0; box-shadow: 4px 2px 3px rgba(0, 0, 0, .4); }
.menu button { display: flex; align-items: center; width: 100%; height: 22px; padding-left: 32px; }
.menu button.hot { padding-left: 3px; gap: 13px; background: #91c9f7; }
.menu hr { margin: 4px 0 4px 28px; border: 0; border-top: 1px solid #d0d0d0; }

.toolbar { display: flex; align-items: center; height: 30px; padding-left: 6px; background: #e5e5e5; border-bottom: 1px solid #8b8b8b; }
.toolbar.second { border-bottom-width: 2px; }
.grip { width: 5px; height: 18px; border: 1px solid #a0a0a0; border-width: 0 1px; }
.inner-grip { margin-left: 7px; }
.brand-grip { margin: 0 4px 0 7px; }
.sep { width: 1px; height: 18px; background: #999; }
.sep.wide { width: 2px; }
.tool { position: relative; display: flex; align-items: center; justify-content: center; width: 31px; height: 24px; }
.ico { width: 18px; height: 18px; }
.bits { font-size: 7px; font-weight: 700; fill: #fff; text-anchor: middle; }
.drop { position: absolute; right: 2px; bottom: 3px; width: 9px; height: 5px; color: #000; }
.letter { font-size: 16px; font-weight: 700; color: #3b3b3b; }
.letter small { font-size: 12px; padding-top: 4px; }
.sheet { appearance: none; width: 72px; height: 21px; padding-left: 4px; background: #e1e1e1; border: 1px solid #b0b0b0; }
.tool-group { display: flex; align-items: center; margin-left: 185px; }
.brand { width: 55px; height: 23px; border: 1px solid #333; border-radius: 2px; background: #dcdcdc; }
.design { display: flex; justify-content: center; font-size: 10px; line-height: 12px; color: #d01840; }
.design b { padding-top: 5px; font-size: 9px; font-weight: 500; color: #222; }
.spice { display: flex; align-items: center; gap: 4px; padding-left: 2px; font-size: 8px; line-height: 8px; text-align: left; }
.arrow { width: 19px; height: 22px; padding-left: 5px; }

.workspace { display: flex; }
.palette { width: 64px; padding: 5px 0 33px; background: #e5e5e5; border-right: 1px solid #8b8b8b; }
.palette-grip { display: block; width: 38px; height: 5px; margin: 0 0 4px 13px; border: 1px solid #999; border-width: 1px 0; }
.pair { display: grid; grid-template-columns: 31px 31px; grid-auto-rows: 25px; }
.pair button { position: relative; display: grid; place-items: center; }
.pair .selected { margin: 1px 1px 1px 3px; background: #b9d7ef; border: 1px solid #90c2ea; }
.pair .serif { font: 16px/20px "Liberation Serif", serif; }
.palette hr { margin: 4px 4px 4px 5px; border: 0; border-top: 1px solid #999; }
.editor { flex: 1; display: flex; flex-direction: column; background: #e5e5e5; }
.command-row { display: flex; height: 19px; background: #e5e5e5; }
.command-row output { width: 106px; padding-left: 7px; line-height: 20px; color: #444; border-right: 1px solid #8b8b8b; }
.command-box { flex: 1; display: flex; margin-left: 15px; background: #fff; border: 1px solid #7a7a7a; border-top: 0; }
.command-box input { flex: 1; }
.command-box button { width: 15px; color: #555; }
.canvas-row { flex: 1; display: flex; }
.canvas { flex: 1; background: #fff; }
.canvas-foot { height: 17px; margin-right: 16px; padding: 3px 4px; background: #f0f0f0; color: #b8b8b8; }
.vscroll { display: flex; flex-direction: column; align-items: center; width: 16px; padding: 5px 0; background: #f0f0f0; color: #555; }
.vscroll svg:last-child { margin-top: auto; }
.vscroll.faint { color: #b8b8b8; }
.status-bar { height: 22px; padding: 4px 6px; line-height: 18px; background: #e5e5e5; border-top: 1px solid #8b8b8b; color: #333; }

/* Numbered red callouts */
.callout { position: absolute; z-index: 3; border: 5px solid #ed1c24; pointer-events: none; }
.callout-menu { left: 195px; top: 20px; width: 193px; height: 127px; }
.callout span, .callout-number { position: absolute; font: 56px/56px Lato, sans-serif; color: #ed1c24; }
.callout span { left: 122px; top: 51px; }
.number-two { left: 789px; top: 165px; }
.number-three { left: 594px; top: 325px; }
.framed { position: absolute; border: 5px solid #ed1c24; background: #f0f0f0; }

/* Library manager */
.library-manager { left: 283px; top: 399px; width: 1073px; }
.dialog-title { display: flex; align-items: center; height: 31px; padding: 0 12px 0 5px; background: #fff; }
.dialog-title h2 { flex: 1; padding-left: 5px; }
.dialog-title button { display: grid; place-items: center; width: 22px; height: 20px; margin-left: 22px; font-size: 14px; }
.manager-body { padding: 11px 13px 5px 8px; }
.tabs { display: flex; align-items: flex-end; }
.tabs button { height: 18px; width: 63px; border: 1px solid #dcdcdc; border-width: 1px 1px 0 0; }
.tabs .current { position: relative; height: 21px; width: 57px; margin-bottom: -1px; border-left-width: 1px; background: #fff; }
.tab-panel { padding: 10px 10px 12px; background: #fff; border: 1px solid #dcdcdc; }
.library-list { display: flex; height: 257px; padding-right: 1px; border: 1px solid #828790; }
.list-clip { flex: 1; overflow: hidden; }
.c-blank { width: 42px; } .c-name { width: 100px; } .c-author { width: 100px; } .c-version { width: 49px; } .c-icon { width: 39px; }
.library-list th { position: relative; height: 24px; padding-left: 4px; border-right: 1px solid #e5e5e5; }
.library-list td { height: 20px; padding-left: 3px; }
.library-list td svg { width: 16px; height: 14px; }
.sort { position: absolute; left: 47%; top: 0; }
.thumb { width: 16px; background: #cdcdcd; }
.short { height: 18px; margin-top: 4px; }
.browse-row { display: flex; gap: 6px; padding: 6px 0 0 1px; }
.push { border: 1px solid #adadad; background: #e1e1e1; }
.push.default { border: 2px solid #0078d7; }
.browse-row .push { width: 73px; height: 21px; line-height: 16px; }
.browse-row input { flex: 1; height: 21px; padding: 0 2px; border: 1px solid #7a7a7a; }
::placeholder { color: #7a7a7a; opacity: 1; }
.manager-body textarea { display: block; width: 100%; height: 110px; margin-top: 7px; border: 1px solid #7a7a7a; background: #fff; resize: none; }
.progress { height: 21px; margin: 5px 0; background: #e6e6e6; border: 1px solid #bcbcbc; }

/* File dialog */
.file-dialog { left: 1175px; top: 777px; width: 671px; box-shadow: 0 -1px 0 #5a6b78; }
.dialog-title.small { height: 20px; padding: 0 2px 0 4px; }
.address-row { display: flex; align-items: center; height: 40px; padding: 4px 10px 0 0; background: #fff; }
.address-row > button { display: grid; place-items: center; width: 30px; height: 20px; }
.address-row > .narrow { width: 20px; }
.address { display: flex; align-items: center; flex: 1; height: 22px; margin-left: 2px; padding-left: 4px; border: 1px solid #d9d9d9; }
.crumb-sep { width: 20px; text-align: center; color: #555; font-size: 14px; }
.history { display: grid; place-items: center; margin-left: auto; width: 16px; color: #666; }
.refresh { display: grid; place-items: center; width: 21px; height: 20px; border-left: 1px solid #d9d9d9; }
.search { display: flex; align-items: center; width: 202px; height: 22px; margin-left: 12px; padding: 0 8px; border: 1px solid #d9d9d9; }
.search input { flex: 1; min-width: 0; }
.command-bar { display: flex; align-items: center; gap: 30px; height: 31px; padding: 0 13px 0 14px; background: #f4f6f8; border-bottom: 1px solid #e5e5e5; color: #1e395b; }
.command-bar button { display: flex; align-items: center; gap: 6px; }
.view-tools { display: flex; gap: 21px; margin-left: auto; }
.view-tools .after { margin-left: 3px; }
.browser { display: flex; height: 299px; background: #fff; }
.places { width: 136px; padding-top: 8px; overflow: hidden; }
.places a { display: flex; align-items: center; gap: 5px; height: 24px; padding-left: 20px; white-space: nowrap; margin-right: 1px; overflow: hidden; }
.places a svg { width: 16px; height: 16px; }
.places .sub { padding-left: 28px; }
.places .gap { margin-top: 8px; }
.places .picked { background: #d9d9d9; }
.browser .vscroll { margin-right: 2px; }
.long { height: 114px; margin-top: 124px; }
.files { flex: 1; display: flex; flex-direction: column; border-left: 1px solid #f0f0f0; }
.files table { width: auto; margin-left: 15px; }
.c-date { width: 120px; } .c-type { width: 114px; }
.files thead { color: #4c607a; }
.files th { position: relative; height: 25px; padding: 0 0 0 7px; border-right: 1px solid #e5e5e5; }
.files th:first-child { padding-left: 3px; }
.files th:last-child { border-right: 0; }
.files tbody::before { content: ""; display: block; height: 6px; }
.files td { height: 21px; padding: 0 0 0 7px; color: #6d6d6d; }
.files td:first-child { padding-left: 5px; color: #000; }
.files td svg { float: left; width: 16px; height: 16px; margin-right: 3px; }
.files .picked { background: #cce8ff; box-shadow: inset 0 0 0 1px #99d1ff; }
.hscroll { display: flex; align-items: center; justify-content: space-between; height: 16px; margin: auto 0 1px 1px; padding: 0 2px 0 4px; background: #f0f0f0; color: #555; }
.hthumb { width: 398px; height: 15px; margin-right: auto; margin-left: 5px; background: #cdcdcd; }
.choose { display: grid; grid-template-columns: 1fr 261px 188px; column-gap: 12px; row-gap: 6px; padding: 9px 15px 6px 0; }
.choose > label { text-align: right; line-height: 24px; margin-right: -8px; }
.combo { display: flex; align-items: center; height: 24px; padding: 0 2px 0 3px; background: #fff; border: 1px solid #7a7a7a; color: #000; }
.combo svg { color: #555; }
.combo input, .combo select { flex: 1; min-width: 0; appearance: none; }
.combo.grey { height: 23px; background: #e1e1e1; border-color: #adadad; }
.actions { grid-column: 3; display: flex; gap: 14px; padding-left: 1px; }
.actions .push { width: 86px; height: 24px; }
.split { display: flex; align-items: center; }
.split span { flex: 1; border-right: 1px solid #666; }
.split svg { margin: 0 1px; }
```
